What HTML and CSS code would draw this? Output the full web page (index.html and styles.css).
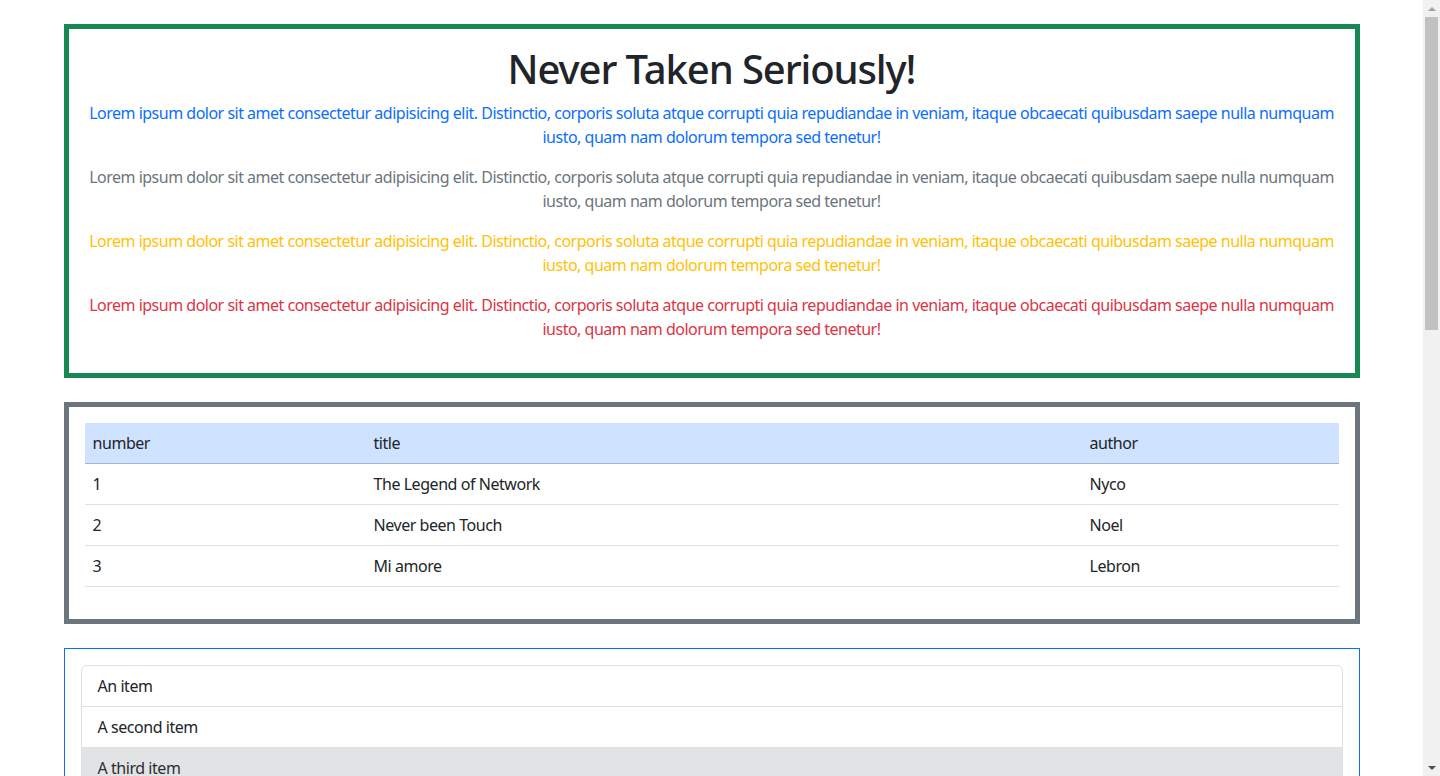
FILE: index.html
```html
<!DOCTYPE html>
<html lang="en">
<head>
<meta charset="utf-8">
<title>Never Taken Seriously!</title>
<link rel="stylesheet" href="styles.css">
</head>
<body>
<div class="page">
  <div class="container">
    <section class="box box-success">
      <h1 class="title">Never Taken Seriously!</h1>
      <p class="text-primary">Lorem ipsum dolor sit amet consectetur adipisicing elit. Distinctio, corporis soluta atque corrupti quia repudiandae in veniam, itaque obcaecati quibusdam saepe nulla numquam iusto, quam nam dolorum tempora sed tenetur!</p>
      <p class="text-secondary">Lorem ipsum dolor sit amet consectetur adipisicing elit. Distinctio, corporis soluta atque corrupti quia repudiandae in veniam, itaque obcaecati quibusdam saepe nulla numquam iusto, quam nam dolorum tempora sed tenetur!</p>
      <p class="text-warning">Lorem ipsum dolor sit amet consectetur adipisicing elit. Distinctio, corporis soluta atque corrupti quia repudiandae in veniam, itaque obcaecati quibusdam saepe nulla numquam iusto, quam nam dolorum tempora sed tenetur!</p>
      <p class="text-danger">Lorem ipsum dolor sit amet consectetur adipisicing elit. Distinctio, corporis soluta atque corrupti quia repudiandae in veniam, itaque obcaecati quibusdam saepe nulla numquam iusto, quam nam dolorum tempora sed tenetur!</p>
    </section>

    <section class="box box-secondary">
      <table class="table">
        <thead>
          <tr><th class="col-num">number</th><th class="col-title">title</th><th>author</th></tr>
        </thead>
        <tbody>
          <tr><td>1</td><td>The Legend of Network</td><td>Nyco</td></tr>
          <tr><td>2</td><td>Never been Touch</td><td>Noel</td></tr>
          <tr><td>3</td><td>Mi amore</td><td>Lebron</td></tr>
        </tbody>
      </table>
    </section>

    <section class="box-thin">
      <ul class="list-group">
        <li class="list-item">An item</li>
        <li class="list-item">A second item</li>
        <li class="list-item list-item-secondary">A third item</li>
        <li class="list-item">A fourth item</li>
        <li class="list-item">And a fifth one</li>
      </ul>
    </section>
  </div>
</div>
<aside class="scrollbar" aria-hidden="true">
  <span class="sb-arrow sb-up"></span>
  <span class="sb-track"><span class="sb-thumb"></span></span>
  <span class="sb-arrow sb-down"></span>
</aside>
</body>
</html>
```
FILE: styles.css
```css
*, *::before, *::after { box-sizing: border-box; }

body {
  margin: 0;
  display: flex;
  align-items: flex-start;
  font-family: "Noto Sans", "Open Sans", sans-serif;
  font-size: 16px;
  line-height: 24px;
  letter-spacing: -0.45px;
  color: #212529;
  background: #fff;
}

.page {
  flex: 1;
  min-width: 0;
}

.container {
  max-width: 1320px;
  margin: 0 auto;
  padding: 0 12px 480px;
}

.box {
  margin-top: 24px;
  padding: 16px;
  border-style: solid;
  border-width: 5px;
}

.box-success { border-color: #198754; text-align: center; }
.box-secondary { border-color: #6c757d; }

.title {
  margin: 0 0 8px;
  font-size: 40px;
  line-height: 48px;
  font-weight: 500;
  letter-spacing: -1.1px;
  color: #212529;
}

.box p {
  margin: 0 0 16px;
  letter-spacing: -0.5px;
}

.text-primary { color: #0d6efd; }
.text-secondary { color: #6c757d; }
.text-warning { color: #ffc107; }
.text-danger { color: #dc3545; }

.table {
  width: 100%;
  table-layout: fixed;
  border-collapse: collapse;
  margin-bottom: 16px;
}

.table th, .table td {
  text-align: left;
  font-weight: 400;
  padding: 8px;
  border-bottom: 1px solid #dee2e6;
}

.table thead th {
  background: #cfe2ff;
  border-bottom: 1px solid #a6b5cc;
}

.col-num { width: 281px; }
.col-title { width: 716px; }

.box-thin {
  margin-top: 24px;
  padding: 16px;
  border: 1px solid #0d6efd;
}

.list-group {
  list-style: none;
  margin: 0;
  padding: 0;
  border: 1px solid #dee2e6;
  border-radius: 6px;
  overflow: hidden;
}

.list-item {
  padding: 8px 16px;
  border-bottom: 1px solid #dee2e6;
}

.list-item:last-child { border-bottom: 0; }

.list-item-secondary {
  background: #e2e3e5;
  color: #2b2f32;
}

/* fake classic scrollbar */
.scrollbar {
  position: sticky;
  top: 0;
  flex: 0 0 17px;
  width: 17px;
  height: 100vh;
  background: #f1f1f1;
  display: flex;
  flex-direction: column;
  align-items: center;
}

.sb-arrow {
  flex: 0 0 17px;
  width: 17px;
  display: flex;
  align-items: center;
  justify-content: center;
}

.sb-arrow::before {
  content: "";
  width: 0;
  height: 0;
  border-left: 4px solid transparent;
  border-right: 4px solid transparent;
}

.sb-up::before { border-bottom: 4px solid #a3a3a3; }
.sb-down::before { border-top: 4px solid #505050; }

.sb-track {
  flex: 1;
  width: 17px;
  display: flex;
  justify-content: center;
}

.sb-thumb {
  width: 13px;
  height: 313px;
  background: #c1c1c1;
}
```
